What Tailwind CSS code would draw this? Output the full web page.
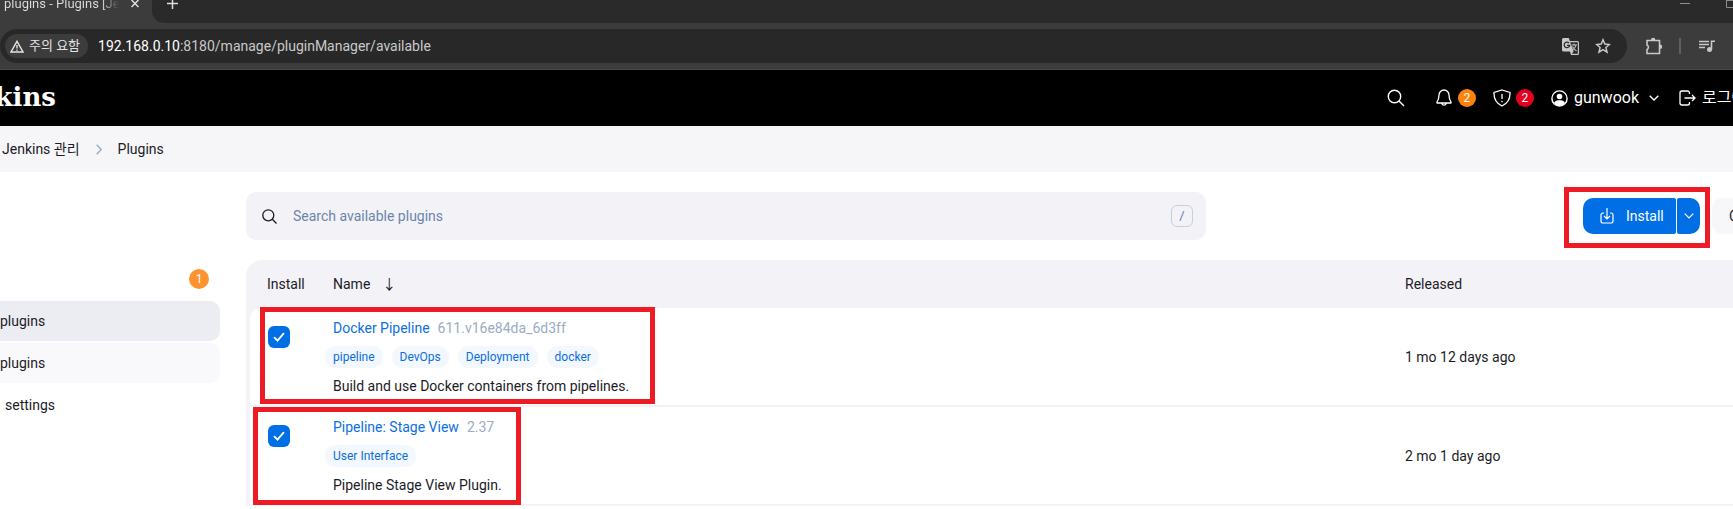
<!DOCTYPE html>
<html lang="ko">

<head>
    <meta charset="UTF-8">
    <meta name="viewport" content="width=device-width, initial-scale=1.0">
    <title>Available plugins - Plugins [Jenkins]</title>
    <script src="https://cdn.jsdelivr.net/npm/@tailwindcss/browser@4"></script>
</head>

<body class="bg-white text-[#1c1c28] text-sm leading-5 overflow-hidden font-[Roboto,'Noto_Sans_CJK_KR',sans-serif]">
    <!-- Browser tabs -->
    <div class="flex h-[23px] bg-[#3c3c3c] overflow-hidden text-[#dedede]">
        <div class="flex w-[152px] shrink-0 items-start pl-1">
            <span class="w-[115px] h-5 -mt-1.5 overflow-hidden whitespace-nowrap text-[13px] bg-linear-to-r from-[#dedede] from-85% to-[#3c3c3c] bg-clip-text text-transparent">plugins - Plugins [Jenkins]</span>
            <button aria-label="Close tab" class="ml-3">
                <svg class="size-2" viewBox="0 0 8 8" stroke="currentColor" stroke-width="1.5"><path d="M.5 0l7 7M7.5 0l-7 7" /></svg>
            </button>
        </div>
        <div class="flex flex-1 items-start bg-[#2a2a2a] rounded-bl-xl">
            <button aria-label="New tab" class="ml-[15px] -mt-0.5">
                <svg class="size-[11px]" viewBox="0 0 11 11" stroke="currentColor" stroke-width="1.5"><path d="M5.5 0v11M0 5.5h11" /></svg>
            </button>
            <button aria-label="Minimize" class="ml-auto mt-[3px] text-[#8e8e8e]">
                <svg class="w-2.5 h-px" viewBox="0 0 10 1"><path fill="currentColor" d="M0 0h10v1H0z" /></svg>
            </button>
            <button aria-label="Maximize" class="ml-9 -mr-[3px] text-[#8e8e8e]">
                <svg class="size-2.5" viewBox="0 0 10 10" fill="none" stroke="currentColor"><path d="M.5 0v7.500h9V.5h-9" /></svg>
            </button>
        </div>
    </div>

    <!-- Address bar -->
    <div class="flex items-center h-[47px] bg-[#3c3c3c] border-b border-[#4a4a4a] text-[#c8c8c8]">
        <div class="flex flex-1 items-center h-[34px] rounded-full bg-[#282828] pl-[5px] pr-4">
            <button class="flex items-center gap-[5px] h-6 rounded-full bg-[#3c3c3c] text-[#e3e3e3] text-[13px] pl-[5px] pr-2">
                <svg class="w-[14px] h-[13px]" viewBox="0 0 14 13" fill="none" stroke="currentColor" stroke-width="1.4"><path d="M7 1.300L13 12H1zM7 5v3.500M7 9.500v1.300" /></svg>
                주의 요함
            </button>
            <label class="flex-1 ml-2.5">
                <input aria-label="Address" class="sr-only" type="text">
                <span class="text-white">192.168.0.10</span><span class="text-[#c8c8c8]">:8180/manage/pluginManager/available</span>
            </label>
            <button aria-label="Translate" class="mr-4">
                <svg class="size-[17px]" viewBox="0 0 17 17" fill="none" stroke="currentColor">
                    <path fill="currentColor" stroke="none" d="M1.500 0h5.300l1 3H15.500A1.500 1.500 0 0117 4.500v11a1.500 1.500 0 01-1.500 1.500H9l-1-3.500H1.500A1.500 1.500 0 010 12V1.500A1.500 1.500 0 011.500 0z" />
                    <path fill="#282828" stroke="none" d="M8.200 4.200h7.600v11.600H9.800l1.800-2.300z" />
                    <path stroke="#282828" stroke-width="1.200" d="M7 5a2.800 2.800 0 10.700 2.300H5" />
                    <path stroke-width="1.100" d="M9.500 7h5.500M12 5.500V7M14 7c-.5 2.500-2 4-3.700 5M10.500 8.500c1 2 2.500 3.500 4 4.500" />
                </svg>
            </button>
            <button aria-label="Bookmark">
                <svg class="size-4" viewBox="0 0 16 16" fill="none" stroke="currentColor" stroke-width="1.500"><path d="M8 1.800l1.800 4.300 4.600.4-3.500 3 1.100 4.600L8 11.700l-4 2.400 1.100-4.600-3.500-3 4.600-.4z" /></svg>
            </button>
        </div>
        <button aria-label="Extensions" class="ml-[18px]">
            <svg class="size-[18px]" viewBox="0 0 18 18" fill="none" stroke="currentColor" stroke-width="1.600">
                <path d="M2 3.500h12.500v13H2v-4a2.500 2.500 0 000-4.500z" />
                <path fill="currentColor" stroke="none" d="M6 3a2.200 2.200 0 014.400 0zM15 7.500a2.200 2.200 0 010 4.400z" />
            </svg>
        </button>
        <div class="w-0.5 h-4 mx-4 bg-[#606060]"></div>
        <button aria-label="Media" class="ml-0.5 mr-[18px]">
            <svg class="size-4" viewBox="0 0 16 16" fill="none" stroke="currentColor" stroke-width="1.600">
                <path d="M0 3.500h10M0 6.500h10M0 9.500h6M12.500 11.500V3.300H16" />
                <circle cx="10.500" cy="11.500" r="2.500" fill="currentColor" stroke="none" />
            </svg>
        </button>
    </div>

    <!-- Header -->
    <header class="flex items-center h-14 bg-black text-white text-base whitespace-nowrap overflow-hidden">
        <a href="#" class="flex justify-end w-14 overflow-hidden font-['DejaVu_Serif',serif] font-bold text-[26px] leading-8 -mt-0.5">kins</a>
        <button aria-label="Search" class="ml-auto">
            <svg class="size-[18px]" viewBox="0 0 18 18" fill="none" stroke="currentColor" stroke-width="1.400"><circle cx="7.500" cy="7.500" r="6.200" /><path d="M12 12l5 5" /></svg>
        </button>
        <button aria-label="Notifications" class="flex items-center gap-1.5 ml-[31px]">
            <svg class="w-4 h-[18px]" viewBox="0 0 16 18" fill="none" stroke="currentColor" stroke-width="1.300"><path d="M8 1a5 5 0 00-5 5c0 4-1 5.500-2 7-.3.700 0 1 .6 1h12.800c.6 0 .9-.3.600-1-1-1.500-2-3-2-7a5 5 0 00-5-5zM5.800 14.500a2.300 2.300 0 004.400 0" /></svg>
            <span class="grid place-items-center size-[18px] rounded-full bg-[#ff820a] text-[12px]">2</span>
        </button>
        <button aria-label="Security warnings" class="flex items-center gap-[5px] ml-[17px]">
            <svg class="size-[18px]" viewBox="0 0 18 18" fill="none" stroke="currentColor" stroke-width="1.300"><path d="M9 1l8 2.500c.3 6-1.500 10.500-8 13.500C2.500 14 .7 9.500 1 3.500zM9 5v5" /><circle cx="9" cy="12.500" r=".8" fill="currentColor" stroke="none" /></svg>
            <span class="grid place-items-center size-[18px] rounded-full bg-[#e6001f] text-[12px]">2</span>
        </button>
        <a href="#" class="flex items-center gap-1.5 ml-[17px]">
            <svg class="size-[17px]" viewBox="0 0 17 17" fill="none" stroke="currentColor" stroke-width="1.400"><circle cx="8.500" cy="8.500" r="7.600" /><circle cx="8.500" cy="6.500" r="2.800" fill="currentColor" stroke="none" /><path fill="currentColor" stroke="none" d="M3 13c1-2.500 3-2.700 5.500-2.700s4.500.2 5.500 2.700c-2.500 4-8.500 4-11 0z" /></svg>
            gunwook
        </a>
        <button aria-label="User menu" class="ml-2.5">
            <svg class="w-[10px] h-[6px]" viewBox="0 0 10 6" fill="none" stroke="currentColor" stroke-width="1.400"><path d="M.7.7L5 5 9.300.7" /></svg>
        </button>
        <a href="#" class="flex items-center gap-1.5 w-[54px] ml-5">
            <svg class="w-[17px] h-4 shrink-0" viewBox="0 0 17 16" fill="none" stroke="currentColor" stroke-width="1.300"><path d="M10.500 4V3A2 2 0 008.500 1H3a2 2 0 00-2 2v10a2 2 0 002 2h5.500a2 2 0 002-2v-1M5.500 8H16M13 5l3 3-3 3" /></svg>
            로그아웃
        </a>
    </header>

    <!-- Breadcrumbs -->
    <nav class="flex items-center h-[46px] pl-0.5 bg-[#f6f6f8]">
        <a href="#">Jenkins 관리</a>
        <svg class="w-[6px] h-[11px] mx-4" viewBox="0 0 6 11" fill="none" stroke="#9aafcc" stroke-width="1.500"><path d="M.7.7l4.500 4.800L.7 10.300" /></svg>
        <a href="#">Plugins</a>
    </nav>

    <div class="flex">
        <!-- Sidebar -->
        <nav class="flex flex-col gap-0.5 w-[220px] shrink-0 pt-[87px]">
            <a href="#" class="flex items-center justify-end h-10 pr-[11px]">
                <span class="grid place-items-center size-5 rounded-full bg-[#ff9330] text-white text-[12px]">1</span>
            </a>
            <a href="#" class="flex items-center h-10 rounded-r-[10px] bg-[#ecedf3]">plugins</a>
            <a href="#" class="flex items-center h-10 rounded-r-[10px] bg-[#f9f9fb]">plugins</a>
            <a href="#" class="flex items-center h-10 pl-[5px]">settings</a>
        </nav>

        <!-- Plugin list -->
        <main class="flex-1 min-w-0 ml-[26px] pt-5">
            <div class="flex items-center justify-between overflow-hidden">
                <label class="flex items-center gap-4 w-[960px] h-12 px-4 rounded-[10px] bg-[#f3f2f7]">
                    <svg class="size-[15px]" viewBox="0 0 15 15" fill="none" stroke="#1c1c28" stroke-width="1.300"><circle cx="6.300" cy="6.300" r="5.500" /><path d="M10.300 10.300l4.200 4.200" /></svg>
                    <input type="search" placeholder="Search available plugins" class="flex-1 outline-none placeholder:text-[#6a86ab]">
                    <kbd class="grid place-items-center size-[22px] -mr-[3px] rounded-md border border-[#c3d0e2] text-[#5f7ba6] text-[13px] font-[Roboto,'Noto_Sans_CJK_KR',sans-serif]">/</kbd>
                </label>
                <div class="flex w-[150px] whitespace-nowrap">
                    <div class="flex gap-px shrink-0">
                        <button class="flex items-center gap-3 w-[93px] h-9 pl-[17px] rounded-l-[10px] rounded-r-[2px] bg-[#006fe6] text-white">
                            <svg class="w-[14px] h-4 shrink-0" viewBox="0 0 14 16" fill="none" stroke="currentColor" stroke-width="1.200"><path d="M4 5H3a2 2 0 00-2 2v6a2 2 0 002 2h8a2 2 0 002-2V7a2 2 0 00-2-2h-1M7 0v11M4 8l3 3 3-3" /></svg>
                            Install
                        </button>
                        <button aria-label="More install options" class="grid place-items-center w-[23px] h-9 rounded-r-[10px] rounded-l-[2px] bg-[#006fe6] text-white">
                            <svg class="w-[10px] h-[6px]" viewBox="0 0 10 6" fill="none" stroke="currentColor" stroke-width="1.200"><path d="M.7.7L5 5 9.300.7" /></svg>
                        </button>
                    </div>
                    <button class="ml-3 h-9 px-[17px] rounded-[10px] bg-[#f7f7fa]">Check now</button>
                </div>
            </div>

            <div class="mt-5 pl-1 rounded-tl-2xl bg-[#f3f2f7]">
                <table class="w-full text-left border-separate border-spacing-0">
                    <thead>
                        <tr class="h-12">
                            <th class="w-[75px] p-0 pl-[17px] font-normal">Install</th>
                            <th class="p-0 pl-2 font-normal">Name<span class="ml-3">↓</span></th>
                            <th class="w-[328px] p-0 font-normal">Released</th>
                        </tr>
                    </thead>
                    <tbody>
                        <tr class="h-[99px]">
                            <td class="p-0 pl-[18px] pt-[18px] align-top rounded-tl-[10px] border-b-2 border-[#f3f2f7] bg-white">
                                <label class="relative block size-[22px]">
                                    <input type="checkbox" checked aria-label="Docker Pipeline" class="block appearance-none size-[22px] rounded-md bg-[#006fe6]">
                                    <svg class="absolute inset-0" viewBox="0 0 22 22" fill="none" stroke="white" stroke-width="1.800" stroke-linecap="round"><path d="M6.500 11.700l3 3 6-7" /></svg>
                                </label>
                            </td>
                            <td class="p-0 pl-2 pt-2.5 align-top border-b-2 border-[#f3f2f7] bg-white">
                                <div><a href="#" class="text-[#0b6fe0]">Docker Pipeline</a><span class="ml-2 text-[#9bacc3]">611.v16e84da_6d3ff</span></div>
                                <div class="flex gap-[9px] my-2 -ml-2 text-xs leading-[22px] text-[#0b6fe0]">
                                    <a href="#" class="px-2 rounded-full bg-[#f2f8fe]">pipeline</a>
                                    <a href="#" class="px-2 rounded-full bg-[#f2f8fe]">DevOps</a>
                                    <a href="#" class="px-2 rounded-full bg-[#f2f8fe]">Deployment</a>
                                    <a href="#" class="px-2 rounded-full bg-[#f2f8fe]">docker</a>
                                </div>
                                <div>Build and use Docker containers from pipelines.</div>
                            </td>
                            <td class="p-0 border-b-2 border-[#f3f2f7] bg-white">1 mo 12 days ago</td>
                        </tr>
                        <tr class="h-[99px]">
                            <td class="p-0 pl-[18px] pt-[18px] align-top border-b-2 border-[#f3f2f7] bg-white">
                                <label class="relative block size-[22px]">
                                    <input type="checkbox" checked aria-label="Pipeline: Stage View" class="block appearance-none size-[22px] rounded-md bg-[#006fe6]">
                                    <svg class="absolute inset-0" viewBox="0 0 22 22" fill="none" stroke="white" stroke-width="1.800" stroke-linecap="round"><path d="M6.500 11.700l3 3 6-7" /></svg>
                                </label>
                            </td>
                            <td class="p-0 pl-2 pt-2.5 align-top border-b-2 border-[#f3f2f7] bg-white">
                                <div><a href="#" class="text-[#0b6fe0]">Pipeline: Stage View</a><span class="ml-2 text-[#9bacc3]">2.37</span></div>
                                <div class="flex my-2 -ml-2 text-xs leading-[22px] text-[#0b6fe0]">
                                    <a href="#" class="px-2 rounded-full bg-[#f2f8fe]">User Interface</a>
                                </div>
                                <div>Pipeline Stage View Plugin.</div>
                            </td>
                            <td class="p-0 border-b-2 border-[#f3f2f7] bg-white">2 mo 1 day ago</td>
                        </tr>
                    </tbody>
                </table>
            </div>
        </main>
    </div>

    <!-- Highlight boxes drawn over the page -->
    <div class="absolute pointer-events-none border-5 border-[#ed1c24] right-[23px] top-[187px] w-[146px] h-[61px]"></div>
    <div class="absolute pointer-events-none border-5 border-[#ed1c24] left-[260px] top-[307px] w-[395px] h-[97px]"></div>
    <div class="absolute pointer-events-none border-5 border-[#ed1c24] left-[253px] top-[407px] w-[268px] h-[98px]"></div>
</body>

</html>
